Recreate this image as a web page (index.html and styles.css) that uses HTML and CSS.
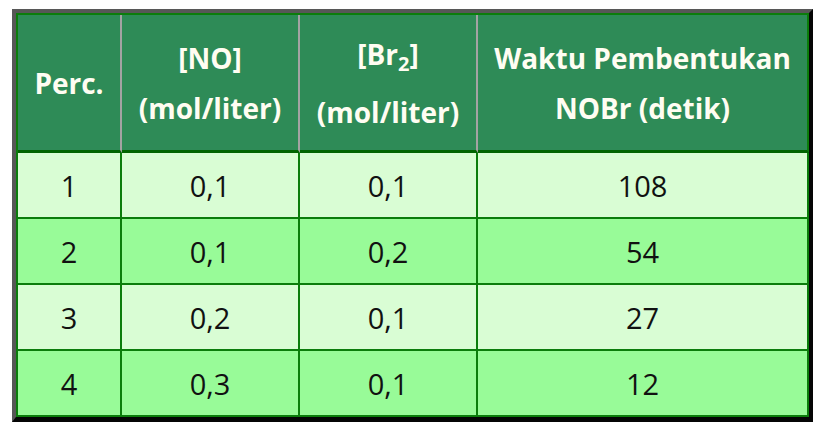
FILE: index.html
```html
<!DOCTYPE html>
<html lang="id">
<head>
<meta charset="utf-8">
<title>Tabel Percobaan NOBr</title>
<link rel="stylesheet" href="styles.css">
</head>
<body>
<div class="frame">
  <table class="data">
    <thead>
      <tr>
        <th class="c1">Perc.</th>
        <th class="c2">[NO]<br>(mol/liter)</th>
        <th class="c3">[Br<sub>2</sub>]<br>(mol/liter)</th>
        <th class="c4">Waktu Pembentukan<br>NOBr (detik)</th>
      </tr>
    </thead>
    <tbody>
      <tr class="odd"><td>1</td><td>0,1</td><td>0,1</td><td>108</td></tr>
      <tr class="even"><td>2</td><td>0,1</td><td>0,2</td><td>54</td></tr>
      <tr class="odd"><td>3</td><td>0,2</td><td>0,1</td><td>27</td></tr>
      <tr class="even"><td>4</td><td>0,3</td><td>0,1</td><td>12</td></tr>
    </tbody>
  </table>
</div>
</body>
</html>
```

FILE: styles.css
```css
html, body {
  margin: 0;
  padding: 0;
  background: #ffffff;
}

.frame {
  margin: 9px 0 0 12px;
  width: 793px;
  border-top: 4px solid #575757;
  border-left: 4px solid #575757;
  border-right: 4px solid #050505;
  border-bottom: 5px solid #050505;
}

.data {
  border-collapse: separate;
  border-spacing: 0;
  table-layout: fixed;
  width: 793px;
  border-left: 2px solid #0b7d0b;
  border-top: 2px solid #0b7d0b;
  font-family: "Open Sans", "DejaVu Sans", sans-serif;
}

.data th {
  background: #2e8b57;
  color: #fffdf2;
  font-weight: 700;
  font-size: 28px;
  line-height: 50px;
  height: 135px;
  padding: 0;
  text-align: center;
  vertical-align: middle;
  border-right: 2px solid #a3a3a3;
  border-bottom: 3px solid #006400;
}

.data th:last-child {
  border-right-color: #0b7d0b;
}

.data th sub {
  font-size: 20px;
  line-height: 46px;
  vertical-align: -6px;
}

.c1 { width: 102px; }
.c2 { width: 176px; }
.c3 { width: 176px; }
.c4 { width: 329px; }

.data td {
  font-size: 29px;
  color: #111111;
  height: 64px;
  padding: 0;
  text-align: center;
  vertical-align: middle;
  border-right: 2px solid #0b7d0b;
  border-bottom: 2px solid #0b7d0b;
}

.odd td { background: #d9fdd4; }
.even td { background: #98fb98; }
```
